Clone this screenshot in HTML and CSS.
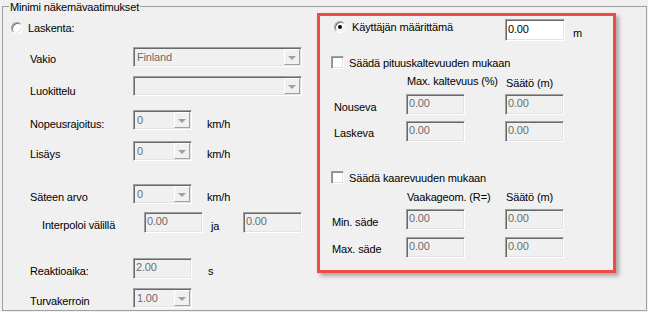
FILE: index.html
```html
<!DOCTYPE html>
<html lang="fi">
<head>
<meta charset="utf-8">
<title>Minimi näkemävaatimukset</title>
<link rel="stylesheet" href="styles.css">
</head>
<body>
<div class="group">
  <span class="legend">Minimi näkemävaatimukset</span>

  <div class="left">
    <div class="r-laskenta"><span class="radio"></span><span class="txt">Laskenta:</span></div>

    <div class="lrow r-vakio">
      <span class="lbl t6">Vakio</span>
      <div class="combo wide"><span class="val">Finland</span><span class="btn"><i class="tri"></i></span></div>
    </div>

    <div class="lrow r-luok">
      <span class="lbl t9">Luokittelu</span>
      <div class="combo wide"><span class="val"></span><span class="btn"><i class="tri"></i></span></div>
    </div>

    <div class="lrow r-nopeus">
      <span class="lbl t8">Nopeusrajoitus:</span>
      <div class="combo"><span class="val">0</span><span class="btn"><i class="tri"></i></span></div>
      <span class="unit t8">km/h</span>
    </div>

    <div class="lrow r-lisays">
      <span class="lbl t7">Lisäys</span>
      <div class="combo"><span class="val">0</span><span class="btn"><i class="tri"></i></span></div>
      <span class="unit t7">km/h</span>
    </div>

    <div class="lrow r-sateen">
      <span class="lbl t7">Säteen arvo</span>
      <div class="combo"><span class="val">0</span><span class="btn"><i class="tri"></i></span></div>
      <span class="unit t7">km/h</span>
    </div>

    <div class="lrow r-interp">
      <span class="lbl lbl-interp t7">Interpoloi välillä</span>
      <div class="tb">0.00</div>
      <span class="ja t8">ja</span>
      <div class="tb">0.00</div>
    </div>

    <div class="lrow r-reakt">
      <span class="lbl t7">Reaktioaika:</span>
      <div class="tb">2.00</div>
      <span class="unit unit-s t7">s</span>
    </div>

    <div class="lrow r-turva">
      <span class="lbl t7">Turvakerroin</span>
      <div class="combo"><span class="val">1.00</span><span class="btn"><i class="tri"></i></span></div>
    </div>
  </div>

  <div class="redbox">
    <div class="rr-user">
      <div class="pick"><span class="radio checked"></span><span class="txt">Käyttäjän määrittämä</span></div>
      <div class="tb white">0.00</div>
      <span class="unit-m">m</span>
    </div>

    <div class="rr-check rr-check1"><span class="check"></span><span class="txt">Säädä pituuskaltevuuden mukaan</span></div>

    <div class="rr-head rr-head1">
      <span class="h1">Max. kaltevuus (%)</span>
      <span class="h2 h2-low">Säätö (m)</span>
    </div>

    <div class="rr-row rr-nouseva">
      <span class="rlbl t7">Nouseva</span>
      <div class="tb">0.00</div>
      <div class="tb second">0.00</div>
    </div>

    <div class="rr-row rr-laskeva">
      <span class="rlbl t6">Laskeva</span>
      <div class="tb">0.00</div>
      <div class="tb second">0.00</div>
    </div>

    <div class="rr-check rr-check2"><span class="check"></span><span class="txt">Säädä kaarevuuden mukaan</span></div>

    <div class="rr-head rr-head2">
      <span class="h1">Vaakageom. (R=)</span>
      <span class="h2">Säätö (m)</span>
    </div>

    <div class="rr-row rr-min">
      <span class="rlbl rlbl-sade t7">Min. säde</span>
      <div class="tb">0.00</div>
      <div class="tb second">0.00</div>
    </div>

    <div class="rr-row rr-max">
      <span class="rlbl rlbl-sade t6">Max. säde</span>
      <div class="tb">0.00</div>
      <div class="tb second">0.00</div>
    </div>
  </div>
</div>
</body>
</html>
```

FILE: styles.css
```css
html, body {
  margin: 0;
  padding: 0;
}

body {
  width: 648px;
  height: 312px;
  overflow: hidden;
  background: #f0f0f0;
  color: #000;
  font-family: "Liberation Sans", Arial, sans-serif;
  font-size: 11px;
  line-height: 13px;
  letter-spacing: -0.15px;
}

.group {
  position: relative;
  box-sizing: border-box;
  margin: 6px 0 0 2px;
  width: 645px;
  height: 305px;
  border: 1px solid #a0a0a0;
  display: flex;
  align-items: flex-start;
}

.legend {
  position: absolute;
  top: -6px;
  left: 6px;
  padding: 0 1px;
  background: #f0f0f0;
  white-space: nowrap;
}

/* ---------- left column ---------- */
.left {
  flex: none;
  width: 314px;
  display: flex;
  flex-direction: column;
}

.r-laskenta {
  display: flex;
  align-items: center;
  height: 13px;
  margin-top: 14px;
  padding-left: 8px;
}

.lrow {
  display: flex;
  align-items: flex-start;
  padding-left: 27px;
}

.r-vakio { margin-top: 13px; }
.r-luok { margin-top: 9px; }
.r-nopeus { margin-top: 12px; }
.r-lisays { margin-top: 10px; }
.r-sateen { margin-top: 23px; }
.r-interp { margin-top: 8px; padding-left: 39px; }
.r-reakt { margin-top: 25px; }
.r-turva { margin-top: 9px; }

.lbl {
  flex: none;
  width: 103px;
  white-space: nowrap;
}

.lbl-interp { width: 102px; }

/* text top offsets inside a control row */
.t6 { padding-top: 6px; }
.t7 { padding-top: 7px; }
.t8 { padding-top: 8px; }
.t9 { padding-top: 9px; }

.unit { margin-left: 15px; }
.unit-s { margin-left: 16px; }

.ja {
  flex: none;
  width: 32px;
  margin-left: 8px;
}

/* ---------- controls ---------- */
.radio {
  flex: none;
  position: relative;
  box-sizing: border-box;
  width: 12px;
  height: 12px;
  margin-right: 5px;
  border-radius: 50%;
  background: #fff;
  border: 1px solid;
  border-color: #a0a0a0 #ffffff #ffffff #a0a0a0;
  box-shadow: inset 1px 1px 0 #7a7a7a, inset -1px -1px 0 #e3e3e3;
}

.radio.checked::after {
  content: "";
  position: absolute;
  left: 3px;
  top: 3px;
  width: 4px;
  height: 4px;
  border-radius: 50%;
  background: #000;
}

.check {
  flex: none;
  box-sizing: border-box;
  width: 13px;
  height: 13px;
  margin-right: 5px;
  background: #fff;
  border: 1px solid;
  border-color: #a0a0a0 #ffffff #ffffff #a0a0a0;
  box-shadow: inset 1px 1px 0 #8a8a8a, inset -1px -1px 0 #e3e3e3;
}

.txt {
  white-space: nowrap;
  padding-top: 1px;
}

.tb,
.combo {
  flex: none;
  box-sizing: border-box;
  border: 1px solid;
  border-color: #a0a0a0 #ffffff #ffffff #a0a0a0;
  box-shadow: inset 1px 1px 0 #696969, inset -1px -1px 0 #e3e3e3;
  background: #f0f0f0;
  color: #6d6d6d;
}

.tb {
  width: 59px;
  height: 21px;
  padding: 2px 0 0 2px;
}

.tb.white {
  width: 60px;
  height: 22px;
  padding: 3px 0 0 2px;
  background: #fff;
  color: #000;
}

.combo {
  width: 59px;
  height: 20px;
  padding: 1px 1px 1px 3px;
  display: flex;
  align-items: center;
  justify-content: space-between;
}

.combo.wide { width: 169px; }

.val { white-space: nowrap; padding-top: 1px; }

.btn {
  flex: none;
  box-sizing: border-box;
  width: 16px;
  height: 16px;
  background: #f0f0f0;
  border: 1px solid;
  border-color: #ffffff #a0a0a0 #a0a0a0 #ffffff;
  display: flex;
  align-items: center;
  justify-content: center;
}

.tri {
  width: 0;
  height: 0;
  margin-top: 1px;
  border-left: 4px solid transparent;
  border-right: 4px solid transparent;
  border-top: 4px solid #a0a0a0;
}

/* ---------- red highlighted panel ---------- */
.redbox {
  flex: none;
  box-sizing: border-box;
  width: 299px;
  height: 260px;
  margin-top: 6px;
  border: 3px solid #f24848;
  box-shadow: 3px 3px 4px rgba(0, 0, 0, 0.3);
  display: flex;
  flex-direction: column;
}

.rr-user {
  display: flex;
  align-items: flex-start;
  margin-top: 3px;
  padding-left: 14px;
}

.pick {
  flex: none;
  width: 171px;
  height: 13px;
  margin-top: 1px;
  display: flex;
  align-items: center;
}

.pick .radio { margin-right: 6px; }

.unit-m {
  margin-left: 8px;
  padding-top: 8px;
}

.rr-check {
  display: flex;
  align-items: center;
  height: 13px;
  padding-left: 11px;
}

.rr-check1 { margin-top: 15px; }
.rr-check2 { margin-top: 29px; }

.rr-head {
  display: flex;
  align-items: flex-start;
  padding-left: 87px;
  white-space: nowrap;
}

.rr-head1 { margin-top: 5px; height: 15px; padding-top: 1px; box-sizing: border-box; }
.rr-head2 { margin-top: 6px; height: 13px; padding-top: 1px; box-sizing: border-box; }

.h1 { flex: none; width: 99px; }
.h2-low { padding-top: 2px; }

.rr-row {
  display: flex;
  align-items: flex-start;
  padding-left: 14px;
}

.rr-nouseva { margin-top: 5px; }
.rr-laskeva { margin-top: 6px; }
.rr-min { margin-top: 6px; padding-left: 12px; }
.rr-max { margin-top: 7px; padding-left: 12px; }

.rlbl {
  flex: none;
  width: 72px;
  white-space: nowrap;
}

.rlbl-sade { width: 74px; }

.tb.second { margin-left: 40px; }
```
